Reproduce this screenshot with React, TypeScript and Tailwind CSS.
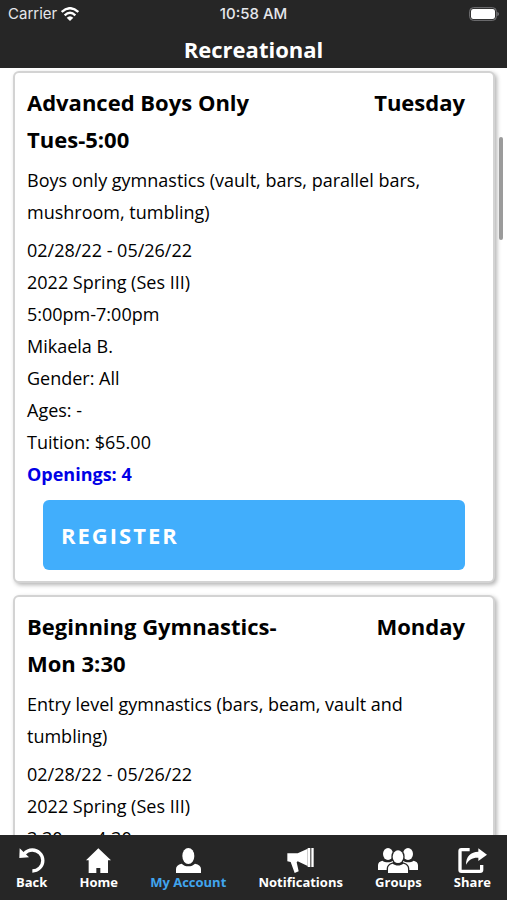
import type { ReactNode } from "react";

type ClassInfo = {
  title: string;
  day: string;
  description: string;
  details: string[];
  openings: number;
};

type NavItem = {
  label: string;
  icon: ReactNode;
  active?: boolean;
};

const classes: ClassInfo[] = [
  {
    title: "Advanced Boys Only Tues-5:00",
    day: "Tuesday",
    description:
      "Boys only gymnastics (vault, bars, parallel bars, mushroom, tumbling)",
    details: [
      "02/28/22 - 05/26/22",
      "2022 Spring (Ses III)",
      "5:00pm-7:00pm",
      "Mikaela B.",
      "Gender: All",
      "Ages: -",
      "Tuition: $65.00",
    ],
    openings: 4,
  },
  {
    title: "Beginning Gymnastics- Mon 3:30",
    day: "Monday",
    description: "Entry level gymnastics (bars, beam, vault and tumbling)",
    details: ["02/28/22 - 05/26/22", "2022 Spring (Ses III)", "3:30pm-4:30pm"],
    openings: 4,
  },
];

const BackIcon = () => (
  <svg viewBox="0 0 78 75" className="h-[25px] w-[26px]" fill="none">
    <path d="M15 18C22 10 30 6 40 6a31 31 0 0 1 0 63" stroke="currentColor" strokeWidth="10" />
    <path d="M2 1L30 28 1 30z" fill="currentColor" />
  </svg>
);

const HomeIcon = () => (
  <svg viewBox="0 0 75 75" className="size-[25px]" fill="currentColor">
    <path d="M37 1L75 37H66V75H43V60H31V75H8V37H0z" />
  </svg>
);

const AccountIcon = () => (
  <svg viewBox="0 0 75 75" className="size-[25px]" fill="currentColor">
    <ellipse cx="37" cy="24" rx="18" ry="24" />
    <path d="M0 75V63c0-9 6-13 17-16 5 5 12 8 20 8s15-3 20-8c12 3 18 7 18 16v12z" />
  </svg>
);

const NotificationsIcon = () => (
  <svg viewBox="0 0 81 75" className="h-[25px] w-[27px]" fill="currentColor">
    <path d="M1 16H32L62 2V54L32 40l-3 3 6 27-12 5L11 42 1 40z" />
    <path d="M62 0h8v57h-8zM73 0h7v57h-7z" />
  </svg>
);

const GroupsIcon = () => (
  <svg viewBox="0 0 120 75" className="h-[25px] w-[40px]" fill="currentColor">
    <ellipse cx="30" cy="18" rx="15" ry="18" />
    <ellipse cx="90" cy="18" rx="15" ry="18" />
    <path d="M0 66V52c0-8 5-12 13-14 9 6 23 6 32 0v28z" />
    <path d="M120 66V52c0-8-5-12-13-14-9 6-23 6-32 0v28z" />
    <g stroke="#262626" strokeWidth="8" paintOrder="stroke">
      <path d="M30 75V62c0-8 4-12 14-15 9 7 23 7 32 0 10 3 14 7 14 15v13z" />
      <ellipse cx="60" cy="26" rx="16" ry="19" />
    </g>
  </svg>
);

const ShareIcon = () => (
  <svg viewBox="0 0 87 75" className="h-[25px] w-[29px]" fill="none">
    <path d="M35 5H10Q6 5 6 9V66Q6 70 10 70H66Q71 70 71 66V51" stroke="currentColor" strokeWidth="10" />
    <path d="M24 50C24 26 38 11 61 11V1L87 20 61 39V29C44 28 32 35 24 50z" fill="currentColor" />
  </svg>
);

const navItems: NavItem[] = [
  { label: "Back", icon: <BackIcon /> },
  { label: "Home", icon: <HomeIcon /> },
  { label: "My Account", icon: <AccountIcon />, active: true },
  { label: "Notifications", icon: <NotificationsIcon /> },
  { label: "Groups", icon: <GroupsIcon /> },
  { label: "Share", icon: <ShareIcon /> },
];

const StatusBar = () => (
  <div className="grid h-7 grid-cols-3 items-center px-2 font-['Inter',sans-serif] text-[15px] leading-7 text-gray-200">
    <div className="flex items-center gap-1">
      <span>Carrier</span>
      <svg viewBox="0 0 54 42" className="h-[14px] w-[18px]" fill="none" stroke="white" strokeWidth="7">
        <path d="M2 15Q27-8 52 15" />
        <path d="M11 25Q27 10 43 25" />
        <path d="M27 42L17 32Q27 23 37 32z" fill="white" stroke="none" />
      </svg>
    </div>
    <span className="text-center font-medium">10:58 AM</span>
    <svg viewBox="0 0 90 42" className="h-[14px] w-[30px] justify-self-end">
      <rect x="2" y="2" width="80" height="38" rx="11" fill="none" stroke="#77777a" strokeWidth="3" />
      <rect x="6" y="6" width="72" height="30" rx="7" fill="white" />
      <path d="M85 14q5 3 5 7t-5 7z" fill="#77777a" />
    </svg>
  </div>
);

const ClassCard = ({ info }: { info: ClassInfo }) => (
  <article className="rounded-md border-2 border-[#d3d3d3] bg-white px-3 py-[11px] shadow-[2px_2px_4px_#b4b4b4]">
    <div className="flex justify-between pr-4 text-[22px] leading-[37px] font-bold">
      <h2 className="w-3/5">{info.title}</h2>
      <div>{info.day}</div>
    </div>
    <p className="mt-1.5 pr-4">{info.description}</p>
    <ul className="mt-1.5">
      {info.details.map((detail) => (
        <li key={detail}>{detail}</li>
      ))}
      <li className="font-bold text-[#0000e6]">Openings: {info.openings}</li>
    </ul>
    <div className="mt-2.5 pr-4 pl-4">
      <button
        type="button"
        className="block h-[70px] w-full rounded-md bg-[#41aefc] px-[18px] text-left text-[22px] font-bold tracking-[2px] text-white"
      >
        REGISTER
      </button>
    </div>
  </article>
);

export default function App() {
  return (
    <div className="flex h-screen flex-col bg-white font-['Open_Sans',sans-serif] text-lg leading-8 text-black">
      <header className="shrink-0 bg-[#262626] text-white">
        <StatusBar />
        <h1 className="h-10 text-center text-[22px] leading-[42px] font-bold">Recreational</h1>
      </header>

      <main className="relative min-h-0 flex-1">
        <div className="flex h-full flex-col gap-3 overflow-y-auto pt-[3px] pr-3 pl-[13px] [scrollbar-width:none]">
          {classes.map((info) => (
            <ClassCard key={info.title} info={info} />
          ))}
        </div>
        {/* scroll position */}
        <div className="absolute top-[69px] right-1 h-[103px] w-1 rounded-full bg-[#9b9b9b]" />
      </main>

      <nav className="flex shrink-0 justify-between bg-[#262626] px-4 pt-[13px] pb-2">
        {navItems.map((item) => (
          <a
            key={item.label}
            href="#"
            className="flex flex-col items-center text-[13px] leading-[19px] font-bold text-white"
          >
            {item.icon}
            <span className={item.active ? "text-[#41a5ee]" : ""}>{item.label}</span>
          </a>
        ))}
      </nav>
    </div>
  );
}
